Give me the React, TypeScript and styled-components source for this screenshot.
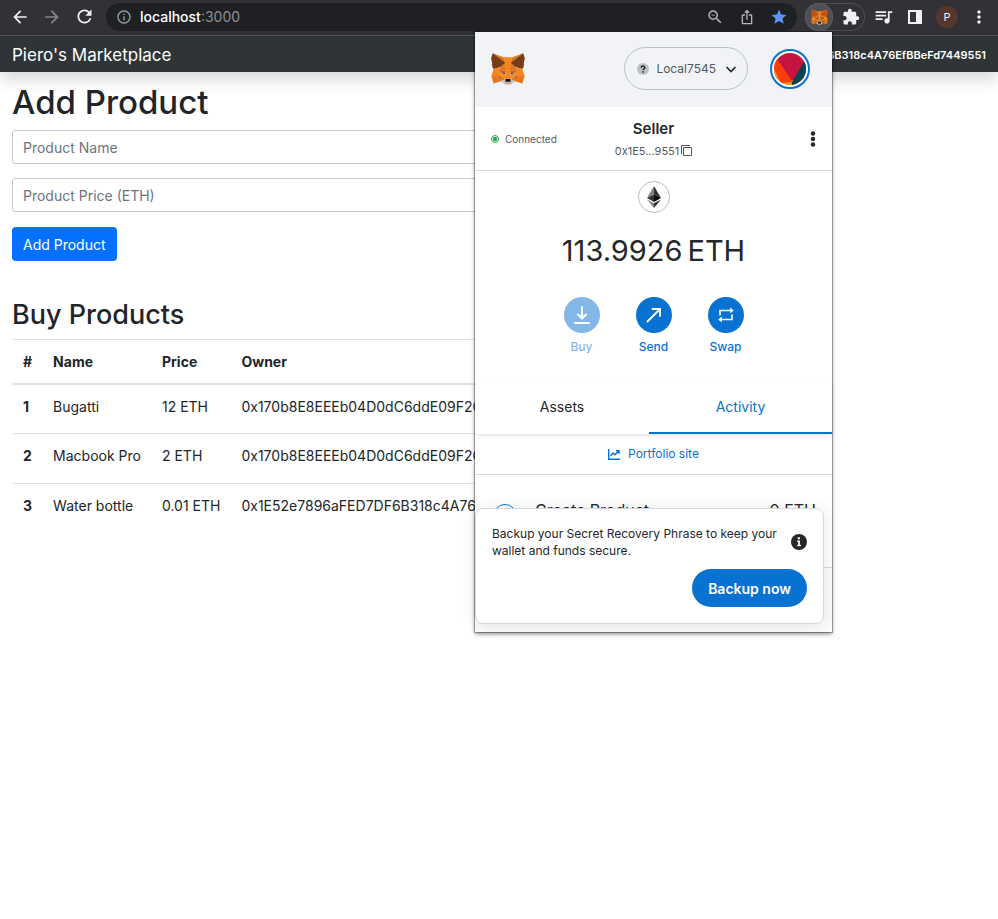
import React from "react";
import styled, { createGlobalStyle } from "styled-components";
import {
  MdArrowBack,
  MdArrowForward,
  MdRefresh,
  MdInfoOutline,
  MdZoomOut,
  MdIosShare,
  MdStar,
  MdExtension,
  MdQueueMusic,
  MdMoreVert,
} from "react-icons/md";

const GlobalStyle = createGlobalStyle`
  *, *::before, *::after { box-sizing: border-box; }
  html, body { margin: 0; background: #fff; }
  body {
    font-family: Inter, "Liberation Sans", sans-serif;
    font-size: 14px;
    line-height: 22px;
    color: #212529;
  }
  button { font-family: inherit; border: 0; padding: 0; background: none; cursor: pointer; }
  a { text-decoration: none; }
`;

const Page = styled.div`
  position: relative;
  min-height: 100vh;
`;

/* Browser toolbar */

const Toolbar = styled.header`
  display: flex;
  align-items: center;
  height: 36px;
  padding: 0 3px 2px 4px;
  background: #323136;
  border-bottom: 1px solid #55585a;
`;

const ToolButton = styled.button<{ $color?: string; $width?: number }>`
  display: flex;
  flex: none;
  align-items: center;
  justify-content: center;
  width: ${(p) => p.$width ?? 32}px;
  height: 28px;
  color: ${(p) => p.$color ?? "#f1f1f3"};
`;

const AddressBar = styled.div`
  display: flex;
  flex: 1;
  align-items: center;
  height: 28px;
  margin: 0 8px 0 6px;
  padding: 0 2px 0 10px;
  border-radius: 14px;
  background: #1f2023;
`;

const Url = styled.span`
  flex: 1;
  margin-left: 8px;
  color: #8d8f94;
  b { font-weight: 500; color: #fff; }
`;

const Extensions = styled.div`
  display: flex;
  gap: 4px;
  margin-right: 2px;
  border-radius: 14px;
  box-shadow: inset 0 0 0 1px #4c4d51;
`;

const ActiveExtension = styled(ToolButton)`
  border-radius: 50%;
  background: #4e4f52;
  box-shadow: inset 0 0 0 1px #5d5e61;
`;

const Profile = styled.span`
  display: grid;
  place-items: center;
  width: 22px;
  height: 22px;
  border-radius: 50%;
  background: #55372e;
  color: #f4efed;
  font-size: 11px;
`;

/* Marketplace page */

const Navbar = styled.nav`
  display: flex;
  align-items: center;
  justify-content: space-between;
  height: 36px;
  padding: 2px 12px 0;
  background: #2f3437;
  box-shadow: 0 8px 16px rgba(0, 0, 0, 0.15);
`;

const Brand = styled.a`
  color: #fff;
  font-size: 17px;
`;

const Account = styled.span`
  color: #fff;
  font-size: 11px;
  font-weight: 600;
`;

const Main = styled.main`
  max-width: 810px;
  padding: 10px 12px;
`;

const Title = styled.h1`
  margin: 0 0 8px;
  font-size: 33px;
  line-height: 40px;
  font-weight: 500;
`;

const Subtitle = styled.h2`
  margin: 36px 0 6px;
  font-size: 27px;
  line-height: 36px;
  font-weight: 500;
`;

const ProductForm = styled.form`
  display: flex;
  flex-direction: column;
  align-items: flex-start;
  gap: 14px;
`;

const TextField = styled.input`
  width: 100%;
  height: 34px;
  padding: 0 10px;
  border: 1px solid #c3cad1;
  border-radius: 3px;
  font: inherit;
  &::placeholder { color: #6c757d; opacity: 1; }
`;

const SubmitButton = styled.button`
  height: 34px;
  margin-top: 1px;
  padding: 0 11px;
  border-radius: 4px;
  background: #0370ff;
  color: #fff;
  font-size: 14px;
`;

const ProductTable = styled.table`
  width: 100%;
  border-collapse: collapse;
  text-align: left;
  th, td {
    height: 50px;
    padding: 11px 10px 0 11px;
    border-top: 1px solid #dee2e6;
    vertical-align: top;
    white-space: nowrap;
  }
  thead th { height: 44px; border-bottom: 2px solid #dee2e6; }
  tbody tr:first-child > * { border-top: 0; }
  tr > :last-child { width: 100%; }
`;

/* Wallet popup */

const Popup = styled.aside`
  position: absolute;
  top: 32px;
  right: 166px;
  width: 357px;
  background: #fff;
  color: #24272a;
  box-shadow: 0 0 0 1px rgba(0, 0, 0, 0.28), 0 2px 4px rgba(0, 0, 0, 0.45);
`;

const PopupHeader = styled.div`
  display: flex;
  align-items: center;
  justify-content: space-between;
  height: 75px;
  padding: 0 22px 2px 16px;
  background: #f2f3f7;
`;

const NetworkButton = styled.button`
  display: flex;
  align-items: center;
  gap: 7px;
  height: 43px;
  margin-left: auto;
  margin-right: 22px;
  padding: 0 8px 0 12px;
  border: 1px solid #bbc0c5;
  border-radius: 22px;
  color: #535a61;
  font-size: 12px;
`;

const AccountBar = styled.div`
  display: grid;
  grid-template-columns: 1fr auto 1fr;
  align-items: center;
  height: 64px;
  padding: 0 11px;
  border-bottom: 1px solid #d6d9dc;
`;

const Status = styled.span`
  display: flex;
  align-items: center;
  gap: 6px;
  padding-left: 5px;
  font-size: 10px;
  line-height: 16px;
  color: #535a61;
`;

const Identity = styled.div`
  display: flex;
  flex-direction: column;
  align-items: center;
  padding-top: 2px;
`;

const AccountName = styled.strong`
  font-size: 15px;
  line-height: 22px;
  font-weight: 600;
`;

const CopyAddress = styled.button`
  display: flex;
  align-items: center;
  gap: 2px;
  color: #535a61;
  font-size: 11px;
  line-height: 22px;
`;

const MenuButton = styled.button`
  justify-self: end;
  display: flex;
`;

const Balance = styled.section`
  display: flex;
  flex-direction: column;
  align-items: center;
  padding: 10px 0 24px;
`;

const TokenBadge = styled.div`
  display: grid;
  place-items: center;
  width: 32px;
  height: 32px;
  border: 1px solid #bbc0c5;
  border-radius: 50%;
`;

const Amount = styled.div`
  display: flex;
  gap: 5px;
  margin: 16px 0 24px;
  font-size: 29px;
  line-height: 44px;
`;

const Actions = styled.div`
  display: flex;
  gap: 24px;
`;

const Action = styled.button`
  display: flex;
  flex-direction: column;
  align-items: center;
  gap: 4px;
  width: 48px;
  color: #0872d2;
  font-size: 12px;
  line-height: 20px;
  font-weight: 500;
  &:disabled { opacity: 0.5; }
`;

const ActionDisc = styled.span`
  display: grid;
  place-items: center;
  width: 36px;
  height: 36px;
  border-radius: 50%;
  background: #0872d2;
`;

const Tabs = styled.div`
  display: grid;
  grid-template-columns: 174px 1fr;
  height: 53px;
  box-shadow: 0 2px 4px rgba(0, 0, 0, 0.1);
`;

const Tab = styled.button<{ $active?: boolean }>`
  border-bottom: 2px solid ${(p) => (p.$active ? "#0872d2" : "transparent")};
  color: ${(p) => (p.$active ? "#0872d2" : "#24272a")};
  font-size: 14px;
`;

const Portfolio = styled.a`
  display: flex;
  align-items: center;
  justify-content: center;
  gap: 8px;
  height: 41px;
  border-bottom: 1px solid #d6d9dc;
  color: #0872d2;
  font-size: 12px;
`;

const ActivityRow = styled.div`
  display: flex;
  align-items: flex-start;
  gap: 18px;
  height: 93px;
  padding: 24px 16px 0 18px;
  border-bottom: 1px solid #d6d9dc;
  font-size: 16px;
  line-height: 22px;
  span:last-child { margin-left: auto; }
`;

const ActivityIcon = styled.span`
  width: 24px;
  height: 24px;
  margin-top: 5px;
  border: 1px solid #0872d2;
  border-radius: 50%;
`;

const ListEnd = styled.div`
  height: 64px;
  background: #fcfcfc;
`;

const Reminder = styled.div`
  position: absolute;
  left: 0;
  right: 8px;
  bottom: 8px;
  padding: 16px;
  border: 1px solid #d6d9dc;
  border-radius: 8px;
  background: #fff;
  box-shadow: 0 2px 16px rgba(0, 0, 0, 0.1);
`;

const ReminderText = styled.div`
  display: flex;
  align-items: center;
  justify-content: space-between;
  gap: 8px;
  font-size: 12px;
  line-height: 17px;
  p { margin: 0; }
  svg { flex: none; }
`;

const BackupButton = styled.button`
  display: block;
  height: 38px;
  margin: 10px 0 0 auto;
  padding: 0 16px;
  border-radius: 19px;
  background: #0872d2;
  color: #fff;
  font-size: 14px;
  font-weight: 600;
`;

const foxFaces: [string, string][] = [
  ["#e2761b", "274.1,35.5 174.6,109.4 193,65.8"],
  ["#e4761b", "44.4,35.5 143.1,110.1 125.6,65.8"],
  ["#e4761b", "238.3,206.8 211.8,247.4 268.5,263 284.8,207.7"],
  ["#e4761b", "33.9,207.7 50.1,263 106.8,247.4 80.3,206.8"],
  ["#e4761b", "103.6,138.2 87.8,162.1 144.1,164.6 142.1,104.1"],
  ["#e4761b", "214.9,138.2 175.9,103.4 174.6,164.6 230.8,162.1"],
  ["#e4761b", "106.8,247.4 140.6,230.9 111.4,208.1"],
  ["#e4761b", "177.9,230.9 211.8,247.4 207.1,208.1"],
  ["#d7c1b3", "211.8,247.4 177.9,230.9 180.6,253 180.3,262.3"],
  ["#d7c1b3", "106.8,247.4 138.3,262.3 138.1,253 140.6,230.9"],
  ["#cd6116", "106.8,247.4 111.6,206.8 80.3,207.7"],
  ["#cd6116", "207,206.8 211.8,247.4 238.3,207.7"],
  ["#cd6116", "230.8,162.1 174.6,164.6 179.8,193.5 188.1,176.1 208.1,185.2"],
  ["#cd6116", "110.6,185.2 130.6,176.1 138.8,193.5 144.1,164.6 87.8,162.1"],
  ["#233447", "138.8,193.5 110.6,185.2 130.5,176.1"],
  ["#233447", "179.7,193.5 188,176.1 208,185.2"],
  ["#e4751f", "87.8,162.1 111.4,208.1 110.6,185.2"],
  ["#e4751f", "208.1,185.2 207.1,208.1 230.8,162.1"],
  ["#f6851b", "179.8,193.5 173.1,227.6 177.9,230.9 207.1,208.1 208.1,185.2"],
  ["#f6851b", "110.6,185.2 111.4,208.1 140.6,230.9 145.4,227.6 138.8,193.5"],
  ["#c0ad9e", "180.3,262.3 180.6,253 178.1,250.8 140.4,250.8 138.1,253 138.3,262.3 106.8,247.4 117.8,256.4 140.1,271.9 178.4,271.9 200.8,256.4 211.8,247.4"],
  ["#161616", "177.9,230.9 173.1,227.6 145.4,227.6 140.6,230.9 138.1,253 140.4,250.8 178.1,250.8 180.6,253"],
  ["#763d16", "278.3,114.2 286.8,73.4 274.1,35.5 177.9,106.9 214.9,138.2 267.2,153.5 278.8,140 273.8,136.4 281.8,129.1 275.6,124.3 283.6,118.2"],
  ["#763d16", "31.8,73.4 40.3,114.2 34.9,118.2 42.9,124.3 36.8,129.1 44.8,136.4 39.8,140 51.3,153.5 103.6,138.2 140.6,106.9 44.4,35.5"],
  ["#f6851b", "267.2,153.5 214.9,138.2 230.8,162.1 207.1,208.1 238.3,207.7 284.8,207.7"],
  ["#f6851b", "103.6,138.2 51.3,153.5 33.9,207.7 80.3,207.7 111.4,208.1 87.8,162.1"],
  ["#f6851b", "174.6,164.6 177.9,106.9 193.1,65.8 125.6,65.8 140.6,106.9 144.1,164.6 138.8,193.5 145.4,227.6 173.1,227.6 179.8,193.5"],
];

function Fox({ width, ears = "#763d16" }: { width: number; ears?: string }) {
  return (
    <svg width={width} height={Math.round(width * 0.93)} viewBox="31 35 257 238" aria-hidden="true">
      {foxFaces.map(([fill, points], i) => (
        <polygon key={i} fill={fill === "#763d16" ? ears : fill} points={points} />
      ))}
    </svg>
  );
}

function Identicon() {
  return (
    <svg width="40" height="40" viewBox="0 0 40 40" aria-hidden="true">
      <defs>
        <clipPath id="identicon"><circle cx="20" cy="20" r="16" /></clipPath>
      </defs>
      <circle cx="20" cy="20" r="19" fill="#fff" stroke="#0872d2" strokeWidth="2" />
      <g clipPath="url(#identicon)">
        <rect width="40" height="40" fill="#c5143f" />
        <path d="M0 14 4 19 11 34 23 31 22 40H0Z" fill="#f59a0b" />
        <path d="M5 10 8 11 22.500 33 11 34 4 19Z" fill="#fb3d07" />
        <path d="M35 11 21.500 34 24 40H40V11Z" fill="#07464f" />
      </g>
    </svg>
  );
}

const products = [
  { id: 1, name: "Bugatti", price: "12 ETH", owner: "0x170b8E8EEEb04D0dC6ddE09F2C" },
  { id: 2, name: "Macbook Pro", price: "2 ETH", owner: "0x170b8E8EEEb04D0dC6ddE09F2C" },
  { id: 3, name: "Water bottle", price: "0.01 ETH", owner: "0x1E52e7896aFED7DF6B318c4A76" },
];

function BrowserToolbar() {
  return (
    <Toolbar>
      <ToolButton aria-label="Back"><MdArrowBack size={20} /></ToolButton>
      <ToolButton aria-label="Forward" $color="#88888c"><MdArrowForward size={20} /></ToolButton>
      <ToolButton aria-label="Reload"><MdRefresh size={21} /></ToolButton>
      <AddressBar>
        <MdInfoOutline size={16} color="#9aa0a6" />
        <Url><b>localhost</b>:3000</Url>
        <ToolButton aria-label="Zoom" $color="#b5b6b9"><MdZoomOut size={18} /></ToolButton>
        <ToolButton aria-label="Share" $color="#b5b6b9"><MdIosShare size={16} /></ToolButton>
        <ToolButton aria-label="Bookmark" $color="#5a94f8"><MdStar size={18} /></ToolButton>
      </AddressBar>
      <Extensions>
        <ActiveExtension aria-label="Wallet" $width={28}><Fox width={17} ears="#c4511a" /></ActiveExtension>
        <ToolButton aria-label="Extensions" $width={28}><MdExtension size={18} /></ToolButton>
      </Extensions>
      <ToolButton aria-label="Media"><MdQueueMusic size={21} /></ToolButton>
      <ToolButton aria-label="Side panel">
        <svg width="14" height="14" viewBox="0 0 14 14" fill="currentColor">
          <path fillRule="evenodd" d="M0 0H14V14H0ZM2 2V12H8V2Z" />
        </svg>
      </ToolButton>
      <ToolButton aria-label="Profile"><Profile>P</Profile></ToolButton>
      <ToolButton aria-label="Menu"><MdMoreVert size={20} /></ToolButton>
    </Toolbar>
  );
}

function Marketplace() {
  return (
    <>
      <Navbar>
        <Brand href="#">Piero's Marketplace</Brand>
        <Account>0x1E52e7896aFED7DF6B318c4A76EfBBeFd7449551</Account>
      </Navbar>
      <Main>
        <Title>Add Product</Title>
        <ProductForm onSubmit={(e) => e.preventDefault()}>
          <TextField aria-label="Product Name" placeholder="Product Name" />
          <TextField aria-label="Product Price (ETH)" placeholder="Product Price (ETH)" />
          <SubmitButton type="submit">Add Product</SubmitButton>
        </ProductForm>
        <Subtitle>Buy Products</Subtitle>
        <ProductTable>
          <thead>
            <tr>
              <th scope="col">#</th>
              <th scope="col">Name</th>
              <th scope="col">Price</th>
              <th scope="col">Owner</th>
            </tr>
          </thead>
          <tbody>
            {products.map((p) => (
              <tr key={p.id}>
                <th scope="row">{p.id}</th>
                <td>{p.name}</td>
                <td>{p.price}</td>
                <td>{p.owner}</td>
              </tr>
            ))}
          </tbody>
        </ProductTable>
      </Main>
    </>
  );
}

function Wallet() {
  return (
    <Popup>
      <PopupHeader>
        <Fox width={34} />
        <NetworkButton>
          <svg width="12" height="12" viewBox="0 0 12 12" aria-hidden="true">
            <circle cx="6" cy="6" r="6" fill="#bbc0c5" />
            <path d="M4.200 4.700a1.800 1.600 0 1 1 2.500 1.400q-.7.300-.7 1" fill="none" stroke="#24272a" strokeWidth="1.500" />
            <circle cx="6" cy="8.900" r=".9" fill="#24272a" />
          </svg>
          Local7545
          <svg width="16" height="16" viewBox="0 0 16 16" fill="none" stroke="#24272a" strokeWidth="1.700" aria-hidden="true">
            <path d="m3.500 6 4.500 4.500L12.500 6" />
          </svg>
        </NetworkButton>
        <Identicon />
      </PopupHeader>
      <AccountBar>
        <Status>
          <svg width="8" height="8" viewBox="0 0 8 8" aria-hidden="true">
            <circle cx="4" cy="4" r="3.500" fill="none" stroke="#28a745" />
            <circle cx="4" cy="4" r="2.200" fill="#28a745" />
          </svg>
          Connected
        </Status>
        <Identity>
          <AccountName>Seller</AccountName>
          <CopyAddress>
            0x1E5...9551
            <svg width="11" height="11" viewBox="0 0 11 11" fill="none" stroke="#535a61" aria-hidden="true">
              <path d="M2.500 2.500h8v8h-8zM.5 9V.5H9" />
            </svg>
          </CopyAddress>
        </Identity>
        <MenuButton aria-label="Account options">
          <svg width="16" height="16" viewBox="0 0 16 16" fill="#24272a">
            <circle cx="8" cy="2.500" r="2.200" />
            <circle cx="8" cy="8" r="2.200" />
            <circle cx="8" cy="13.500" r="2.200" />
          </svg>
        </MenuButton>
      </AccountBar>
      <Balance>
        <TokenBadge>
          <svg width="14" height="22" viewBox="0 0 14 22" aria-hidden="true">
            <path d="M7 0V8.500L0 12Z" fill="#828384" />
            <path d="M7 0V8.500L14 12Z" fill="#343434" />
            <path d="M7 8.500V16L0 12Z" fill="#343434" />
            <path d="M7 8.500V16L14 12Z" fill="#0b0b0b" />
            <path d="M0 13.500 7 17.300V22Z" fill="#828384" />
            <path d="M14 13.500 7 17.300V22Z" fill="#343434" />
          </svg>
        </TokenBadge>
        <Amount><span>113.9926</span><span>ETH</span></Amount>
        <Actions>
          <Action disabled>
            <ActionDisc>
              <svg width="16" height="18" viewBox="0 0 16 18" fill="none" stroke="#fff" strokeWidth="2" strokeLinecap="round" strokeLinejoin="round">
                <path d="M8 1v11M4 8.500l4 4 4-4M1 17h14" />
              </svg>
            </ActionDisc>
            Buy
          </Action>
          <Action>
            <ActionDisc>
              <svg width="16" height="16" viewBox="0 0 16 16" fill="none" stroke="#fff" strokeWidth="1.800" strokeLinecap="round">
                <path d="M1.500 14.500 14 2M6.500 2H14V9" />
              </svg>
            </ActionDisc>
            Send
          </Action>
          <Action>
            <ActionDisc>
              <svg width="16" height="16" viewBox="0 0 16 16" fill="none" stroke="#fff" strokeWidth="1.600">
                <path d="M2 8.500V3.500H12.500M14 7.500V12.500H3.500" />
                <path d="M12.200 0.500 15.800 3.500 12.200 6.500ZM3.800 9.500.2 12.500 3.800 15.500Z" fill="#fff" stroke="none" />
              </svg>
            </ActionDisc>
            Swap
          </Action>
        </Actions>
      </Balance>
      <Tabs>
        <Tab>Assets</Tab>
        <Tab $active>Activity</Tab>
      </Tabs>
      <Portfolio href="#">
        <svg width="12" height="11" viewBox="0 0 12 11" fill="none" stroke="#0872d2" strokeWidth="1.400" aria-hidden="true">
          <path d="M.7 0V10.300H12M2.500 6.800 5 4l2 1.800L10.500 2M8 1.700h3v3" />
        </svg>
        Portfolio site
      </Portfolio>
      <ActivityRow>
        <ActivityIcon />
        <span>Create Product</span>
        <span>0 ETH</span>
      </ActivityRow>
      <ListEnd />
      <Reminder>
        <ReminderText>
          <p>Backup your Secret Recovery Phrase to keep your wallet and funds secure.</p>
          <svg width="16" height="16" viewBox="0 0 16 16" role="img" aria-label="Info">
            <circle cx="8" cy="8" r="8" fill="#24272a" />
            <path d="M6.700 3.200h2.200v2H6.700zM6.200 6.500h2.700v4.300h1v1.500H6.200v-1.500h1V8h-1z" fill="#fff" />
          </svg>
        </ReminderText>
        <BackupButton>Backup now</BackupButton>
      </Reminder>
    </Popup>
  );
}

export default function App() {
  return (
    <Page>
      <GlobalStyle />
      <BrowserToolbar />
      <Marketplace />
      <Wallet />
    </Page>
  );
}
